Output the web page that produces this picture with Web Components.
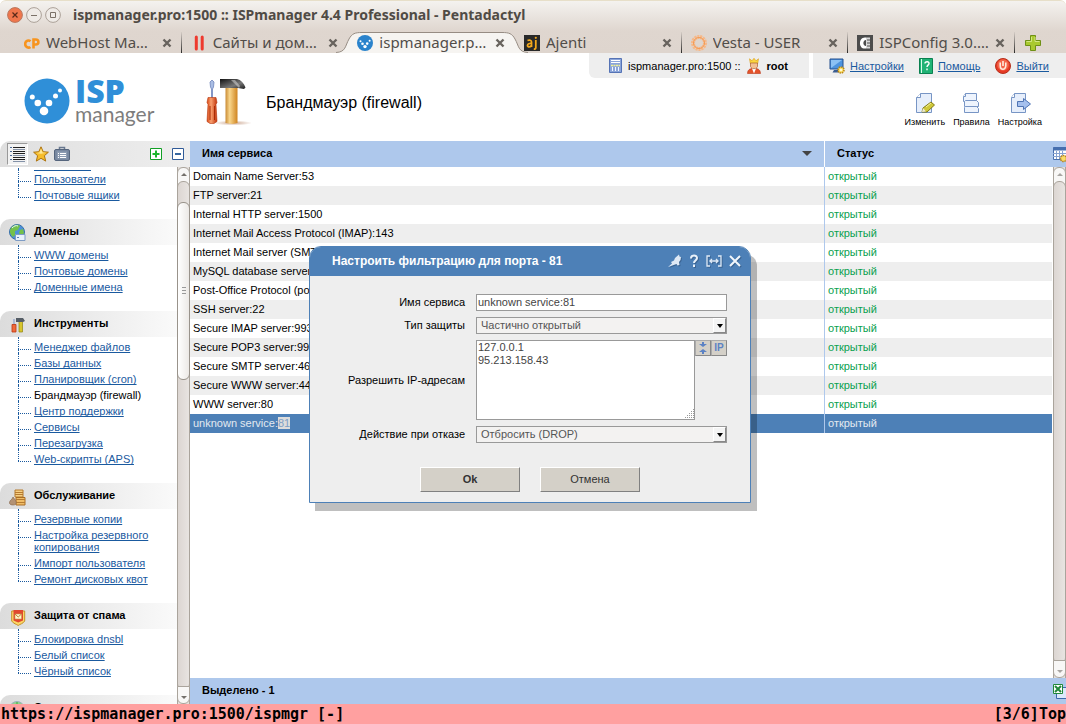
<!DOCTYPE html>
<html lang="ru">
<head>
<meta charset="utf-8">
<meta name="viewport" content="width=device-width, initial-scale=1">
<title>ISPmanager 4.4 Professional</title>
<style>
  html, body { margin: 0; height: 100%; }
  body {
    font: 11px/12px "Liberation Sans", Arial, sans-serif;
    color: #000; background: #fff;
    --blue: #4d80b7; --pale: #aec8ec; --link: #1a5a9f; --stripe: #eeeeee;
  }
</style>
</head>
<body>
<manager-app></manager-app>

<script>
const ICONS = {
  'win-close': [16, 16, `<circle cx="8" cy="8" r="7.4" fill="#f0764c" stroke="#b9785f"/><path d="M5.5 5.5l5 5m0-5l-5 5" stroke="#5b2a19" stroke-width="1.2"/>`],
  'win-min': [16, 16, `<circle cx="8" cy="8" r="7.4" fill="#efebe7" stroke="#aba198"/><path d="M5 8.5h6" stroke="#7b7168"/>`],
  'win-max': [16, 16, `<circle cx="8" cy="8" r="7.4" fill="#efebe7" stroke="#aba198"/><path d="M5.5 5.5h5v5h-5z" fill="none" stroke="#7b7168"/>`],
  'tab-close': [10, 10, `<path d="M1.5 1.5l7 7m0-7l-7 7" stroke="#68635e" stroke-width="2.4"/>`],
  'plus': [16, 16, `<path d="M5.5 .5h5v5h5v5h-5v5h-5v-5h-5v-5h5z" fill="#a9c92f" stroke="#6f9016"/><path d="M6.5 2v4.500h-5M10 2v4.500h4.500" fill="none" stroke="#d3e684"/>`],
  'cpanel': [16, 16, `<path d="M6.500 6.200C5 4.900 1.200 5.300 1.200 9c0 3.500 3.600 4.300 5.200 3M9.500 13.500V4.500h2.200c3.600 0 3.600 5 0 5h-1.500" fill="none" stroke="#f7941e" stroke-width="2.600"/>`],
  'plesk': [16, 16, `<path d="M5.300 2v12M11.200 2v12" stroke="#ee3a2e" stroke-width="3" stroke-linecap="round"/>`],
  'isp': [16, 16, `<circle cx="8" cy="8" r="8" fill="#2a83cc"/><g fill="#fff"><circle cx="3.500" cy="6.200" r="1"/><circle cx="5.500" cy="8.700" r="1.300"/><circle cx="8" cy="11.600" r="1.700"/><circle cx="10.200" cy="8.600" r="1.300"/><circle cx="12.600" cy="5.800" r="1"/></g>`],
  'ajenti': [16, 16, `<path d="M0 0h16v16H0z" fill="#292929"/><path d="M3.500 5.500c2-.8 4-.4 4 1.500v5M7.500 8.500c-2-.2-4 .2-4 1.900 0 2 3.300 1.800 4 0M11.800 5v7.500c0 1.200-.7 1.700-2 1.600" fill="none" stroke="#f5a81c" stroke-width="1.800"/><circle cx="11.800" cy="2.800" r="1.100" fill="#f5a81c"/>`],
  'vesta': [16, 16, `<circle cx="8" cy="8" r="6" fill="none" stroke="#f7b888" stroke-width="4" stroke-dasharray="1.900 .7"/><circle cx="8" cy="8" r="5.500" fill="none" stroke="#f49a52"/>`],
  'ispconfig': [16, 16, `<path d="M0 0h16v16H0z" fill="#4c4c4c"/><path d="M9 2.500C1 1 1 15 9 13.500v-2.500C5.500 11 5.500 5 9 5z" fill="#fff"/><path d="M9 2.500h4v11H9z" fill="#d8d8d8"/><path d="M10 5h3M10 8h3M10 11h3" stroke="#4c4c4c"/>`],
  'logo': [46, 46, `<circle cx="23" cy="23" r="22.500" fill="#2f8fd8"/><g fill="#fff"><circle cx="8.300" cy="19" r="2.500"/><circle cx="13.800" cy="25" r="3.300"/><circle cx="20" cy="33" r="4.300"/><circle cx="25" cy="25" r="3.300"/><circle cx="31.500" cy="18" r="2.500"/><circle cx="36" cy="12.600" r="2"/></g>`],
  'tools': [48, 48, `
    <defs>
      <linearGradient id="w" x2="1"><stop stop-color="#c98b35"/><stop offset=".35" stop-color="#f9d68b"/><stop offset="1" stop-color="#cf8420"/></linearGradient>
      <linearGradient id="r" x2="1"><stop stop-color="#d94714"/><stop offset=".4" stop-color="#f9a06f"/><stop offset="1" stop-color="#c13208"/></linearGradient>
      <linearGradient id="k" x2="1" y2="1"><stop stop-color="#111"/><stop offset=".6" stop-color="#777"/><stop offset="1" stop-color="#1b1b1b"/></linearGradient>
      <radialGradient id="s"><stop stop-color="#a05a30" stop-opacity=".55"/><stop offset="1" stop-color="#a05a30" stop-opacity="0"/></radialGradient>
    </defs>
    <ellipse cx="28" cy="45" rx="19" ry="2.500" fill="url(#s)"/>
    <path d="M5 4l2-2 2 2-.5 5-1 2v9h-1v-9l-1-2z" fill="#a9bde4" stroke="#7085bb" stroke-width=".8"/>
    <path d="M3 19.500h8l1 5-1 2 1 17-3 2H5l-3-2 1-17-1-2z" fill="url(#r)" stroke="#b5380f" stroke-width=".6"/>
    <path d="M5 28v14M9.500 28v14" stroke="#a92c07"/>
    <path d="M20.500 10h12v35l-5 1-7-1z" fill="url(#w)"/>
    <path d="M15 1h17c4 1 7 4 8.500 8.500L39 11l-6-1H15z" fill="url(#k)"/><path d="M26 2h4l5 6-1 2z" fill="#c9c9c9" opacity=".6"/>`],
  'server': [13, 15, `<path d="M.5 .5h12v14H.5z" fill="#8ba5d9" stroke="#5573b5"/><path d="M2 2.500h9M2 4.500h9" stroke="#fff"/><path d="M2 7.500h9" stroke="#eef099" stroke-width="1.500" stroke-dasharray="2 .5"/><path d="M3.500 9v4M6.500 9v4M9.500 9v4" stroke="#f2f6ff"/>`],
  'king': [14, 16, `<path d="M2.500 .8l2.500 2L7 .3l2 2.500 2.500-2-.8 4.700H3.300z" fill="#fbd63e" stroke="#d69a17" stroke-width=".6"/><path d="M3.500 5h7v3.500c-.7 3-6.300 3-7 0z" fill="#f3c094" stroke="#a8602f" stroke-width=".7"/><path d="M.5 15.500c.2-4 2.500-4.500 4-5L7 13l2.500-2.500c1.500.5 3.800 1 4 5z" fill="#e4532a" stroke="#b83818" stroke-width=".6"/><path d="M5 10.500l2 5 2-5-2 1z" fill="#fff"/>`],
  'monitor': [16, 16, `<path d="M1 1h13v10H1z" fill="#4d93de" stroke="#24508f"/><path d="M2 2h11L2 10z" fill="#8cc1f3"/><path d="M5 12h5l1.500 2.500h-8z" fill="#3b5d91"/><circle cx="12" cy="12" r="3" fill="#fce16c" stroke="#bd8612" stroke-width="1.500" stroke-dasharray="1.500 .8"/><circle cx="12" cy="12" r="1" fill="#fff"/>`],
  'book': [14, 16, `<path d="M.5 .5h13v15H.5z" fill="#20b375" stroke="#0b8150"/><path d="M2.500 1v14" stroke="#d9fbe9"/><path d="M6 5.500c0-2.600 4.500-2.300 4 .2-.3 1.500-2 1.500-2 3.300M8 10.500v1.800" fill="none" stroke="#fff" stroke-width="1.400"/>`],
  'power': [16, 16, `<circle cx="8" cy="8" r="7.500" fill="#e63a25" stroke="#b6301c"/><circle cx="8" cy="7" r="5.800" fill="#f4654a"/><path d="M5.200 4.500v3c0 5 5.600 5 5.600 0v-3M8 3v5" fill="none" stroke="#ffeadd" stroke-width="1.600"/>`],
  'edit': [22, 24, `<path d="M6.500 1.500h11v19h-15v-15z" fill="#e6eefb" stroke="#7795c5"/><path d="M6.500 1.500v4h-4" fill="#fff" stroke="#7795c5"/><path d="M8 20l1-4 8-6 3.500 3-7.500 7z" fill="#cfc838" stroke="#817b16"/><path d="M8 20l1-4 3 3.500z" fill="#eceada"/><path d="M12 15l5-4" stroke="#f7f29d"/>`],
  'rules': [22, 24, `<g fill="#eef4fd" stroke="#7795c5"><path d="M5.500 1.500h11v8h-13v-5z"/><path d="M5.500 8.500h11l2 2v4h-14v-5z"/><path d="M5.500 14.500h11l2 2v4h-14v-5z"/></g><path d="M5.500 1.500v3h-2" fill="#fff" stroke="#7795c5"/>`],
  'export': [22, 24, `<path d="M5.500 1.500h11v19h-14v-15z" fill="#e6eefb" stroke="#7795c5"/><path d="M5.500 1.500v4h-3" fill="#fff" stroke="#7795c5"/><path d="M8.500 9.500h6v-3l7 5.500-7 5.500v-3h-6z" fill="#a5c0ee" stroke="#4f74b4"/>`],
  'list': [16, 16, `<path d="M3 1.500h12M3 5.500h12M3 7.500h12M3 11.500h12M3 13.500h12" stroke="#222"/><path d="M3 3.500h12M3 9.500h12M3 15.500h12" stroke="#8492a8"/><path d="M0 1.500h2M0 5.500h2M0 9.500h2M0 13.500h2" stroke="#4d6c9b"/>`],
  'star': [16, 16, `<path d="M8 .8l2.200 4.900 5.200.5-4 3.500 1.300 5.400L8 12.300l-4.700 2.800 1.300-5.400-4-3.500 5.200-.5z" fill="#f6bd2c" stroke="#ad7410"/><path d="M8 2.500l1.500 4 4 .3-5.500 1-5-.8 3.500-.5z" fill="#ffe894"/>`],
  'clip': [16, 16, `<rect x=".5" y="3.500" width="15" height="11" rx="1.500" fill="#7888a0" stroke="#55657d"/><path d="M5.500 3V1.500h5V3" fill="none" stroke="#68788f" stroke-width="1.500"/><path d="M3 5.500h10v7H3z" fill="#8d9cb2"/><path d="M4 7.500h1M6 7.500h6M4 9.500h1M6 9.500h6M4 11.500h1M6 11.500h6" stroke="#fff"/>`],
  'expand': [13, 13, `<path d="M.5 .5h11v11H.5z" fill="#fff" stroke="#119f25"/><path d="M6 2.500v7M2.500 6h7" stroke="#1bb62d" stroke-width="2"/>`],
  'collapse': [13, 13, `<path d="M.5 .5h11v11H.5z" fill="#fff" stroke="#305b98"/><path d="M3 6h6" stroke="#36669f" stroke-width="2"/>`],
  'globe': [18, 18, `<circle cx="8" cy="8" r="7.500" fill="#4d91d9" stroke="#376fa8"/><path d="M2 4c3-4 7-4 9-2L9 6 6 7v4l-2 2C1 10 0 7 2 4zM11 6l3-1 1 4-3 4-2-4z" fill="#74c14a"/><path d="M3 4c2-2 4-3 6-2" stroke="#e3f5ff" fill="none"/><path d="M6.500 10.500h9.500v6H6.500z" fill="#e8f1fc" stroke="#7e9cc5"/><path d="M8 13.500h2" stroke="#5f82b5"/>`],
  'smalltools': [16, 16, `<path d="M5 2v6" stroke="#9aabce" stroke-width="1.500"/><path d="M3 7.500h4V15H3z" fill="#ee6a3b" stroke="#bd3512" stroke-width=".8"/><path d="M10 4h3.500v11H10z" fill="#d7c52d" stroke="#92850f" stroke-width=".7"/><path d="M7 1h7l2 3-2 1H7z" fill="#555d66"/>`],
  'crates': [17, 17, `<path d="M6 1h8v7H6z" fill="#f6cf83" stroke="#b57a2e"/><path d="M7 8.500h9V16H7z" fill="#f0bd67" stroke="#aa6d24"/><path d="M6 3.500h8M6 5.500h8M7 10.500h9M7 13.500h9" stroke="#b67b31"/><path d="M4 8l-1 2c-4 3-3 6 1 6s4-3 1.500-6z" fill="#b39274" stroke="#84654a" stroke-width=".6"/>`],
  'shield': [17, 17, `<path d="M2.700 2h13v10c-2 3-4.700 3-6.500 4.500C7.400 15 4.700 15 2.700 12z" fill="#fbd768" stroke="#c3912a"/><path d="M4.500 1h9.500v10.500l-4.800 2-4.700-2z" fill="#e1472f"/><path d="M6 5h6.500v5H6z" fill="#fff4cf" stroke="#c99c4f" stroke-width=".6"/><path d="M6 5l3.200 3 3.300-3" fill="none" stroke="#bc8532"/>`],
  'stats': [17, 17, `<circle cx="8" cy="8" r="7.500" fill="#8fd48c" stroke="#9db0bf"/><path d="M8 1v7h7" stroke="#3ea940" fill="none"/>`],
  'sort': [10, 5, `<path d="M0 0h10L5 5z" fill="#444"/>`],
  'grid': [14, 16, `<path d="M.5 .5h13v12H.5z" fill="#fff" stroke="#466fae"/><path d="M0 2h14" stroke="#466fae" stroke-width="3"/><path d="M3.500 4v8M6.500 4v8M9.500 4v8M0 6.500h14M0 9.500h14" stroke="#86a2d0"/><circle cx="10.500" cy="11.500" r="3" fill="#fbdc68" stroke="#b78520" stroke-width="1.500" stroke-dasharray="1.500 .7"/>`],
  'excel': [14, 16, `<path d="M3.500 3.500h11v11h-11z" fill="#dbe8fb" stroke="#3b68ac"/><path d="M.5 .5h9v9h-9z" fill="#fff" stroke="#21883a"/><path d="M2 2l6 6M8 2L2 8" stroke="#21883a" stroke-width="2"/>`],
  'pin': [14, 14, `<path d="M0 13l4-3.500L3 8l3-1.500L7 4l4-3.500.500 2L13 3l-.5 3-1.500 2 .5 3-2 .5-1-1.500z" fill="#dfe9f5"/>`],
  'help': [10, 14, `<path d="M2 4.500c0-4 6-3.700 6-.5C8 6.500 5 6.500 5 9M5 10.500V13" fill="none" stroke="#e9f1fa" stroke-width="2"/>`],
  'width': [16, 12, `<path d="M4 1H1v10h3M12 1h3v10h-3M3.500 6h9M6 4L4 6l2 2M10 4l2 2-2 2" fill="none" stroke="#dfe9f5" stroke-width="1.300"/>`],
  'close': [12, 12, `<path d="M1 1l10 10M11 1L1 11" stroke="#f2f7fc" stroke-width="2"/>`],
  'shrink': [8, 12, `<path d="M3 0h2v2h3L4 5 0 2h3zM4 7l4 3H5v2H3v-2H0z" fill="#5c82c4"/>`],
  'down': [6, 4, `<path d="M0 0h6L3 4z" fill="#000"/>`],
  'grip': [10, 10, `<path d="M9.500 0v10M7.500 2v8M5.500 4v6M3.500 6v4M1.500 8v2" stroke="#999" stroke-dasharray="1 1"/>`],
  'thumb-up': [6, 3, `<path d="M0 3h6L3 0z" fill="#74706b"/>`],
  'thumb-down': [6, 3, `<path d="M0 0h6L3 3z" fill="#74706b"/>`],
  'curve': [26, 21, `<path d="M0 20.500C10 20 9 14 13 7 16 1.500 19 .5 26 .5V21H0z" fill="#f6f4f1"/><path d="M0 20.500C10 20 9 14 13 7 16 1.500 19 .5 26 .5" fill="none" stroke="#968c83"/>`]
};

function define(name, css, html, setup) {
  const template = document.createElement('template');
  template.innerHTML = `<style>*{box-sizing:border-box}${css}</style>${html}`;
  customElements.define(name, class extends HTMLElement {
    constructor() {
      super();
      this.attachShadow({ mode: 'open' }).append(template.content.cloneNode(true));
    }
    connectedCallback() {
      if (setup && !this.ready) { this.ready = true; setup(this, this.shadowRoot); }
    }
  });
}

define('ui-icon', `:host{display:block;flex:none;line-height:0}svg{display:block}`, `<span></span>`, (host, root) => {
  const [w, h, body] = ICONS[host.getAttribute('name')];
  root.querySelector('span').innerHTML = `<svg width="${w}" height="${h}" viewBox="0 0 ${w} ${h}" aria-hidden="true">${body}</svg>`;
});

/* Window frame: title and tab strip */
define('browser-tab', `
  :host{display:flex;align-items:center;flex:167 1 0;min-width:0;gap:6px;padding:0 9px;height:21px;position:relative;border-right:1px solid transparent;color:#514d49}
  :host([divider]){border-right:1px solid;border-image:linear-gradient(#dfd6cf,#222) 1}
  .label{flex:1;min-width:0;overflow:hidden;white-space:nowrap;padding-bottom:2px}
  button{border:0;padding:0;background:none;flex:none}
  .edge{display:none;position:absolute;top:0;left:-12px}
  .edge.r{left:auto;right:-14px;transform:scaleX(-1)}
  .top{display:none;position:absolute;left:13px;right:11px;top:0;height:100%;background:#f6f4f1;border-top:1px solid #968c83}
  :host([active]) :is(.edge,.top){display:block}
  .site,.label,button{position:relative}`,
  `<div class="top"></div><ui-icon class="edge" name="curve"></ui-icon><ui-icon class="edge r" name="curve"></ui-icon>
   <span class="site"></span><span class="label"><slot></slot></span><button type="button" aria-label="Закрыть вкладку"><ui-icon name="tab-close"></ui-icon></button>`,
  (host, root) => { root.querySelector('.site').innerHTML = `<ui-icon name="${host.getAttribute('icon')}"></ui-icon>`; });

define('browser-frame', `
  :host{display:block;background:linear-gradient(#f4f2ef,#dfd6cf 30px,#ded5ce);font:15px/18px "Noto Sans",sans-serif;border-top:1px solid #e7dfc9;border-radius:6px 6px 0 0}
  .title{display:flex;align-items:center;height:31px;padding:0 7px 4px;gap:3px;color:#504b45;font-weight:700;font-size:14px}
  .title span{padding-left:9px;white-space:nowrap}
  nav{display:flex;height:21px;padding:0 0 0 15px}
  .new{border:0;background:none;width:51px;padding:0 0 0 10px;flex:none}`,
  `<div class="title"><ui-icon name="win-close"></ui-icon><ui-icon name="win-min"></ui-icon><ui-icon name="win-max"></ui-icon>
     <span>ispmanager.pro:1500 :: ISPmanager 4.4 Professional - Pentadactyl</span></div>
   <nav>
     <browser-tab icon="cpanel" divider>WebHost Ma…</browser-tab><browser-tab icon="plesk">Сайты и дом…</browser-tab>
     <browser-tab icon="isp" active>ispmanager.p…</browser-tab><browser-tab icon="ajenti" divider>Ajenti</browser-tab>
     <browser-tab icon="vesta" divider>Vesta - USER</browser-tab><browser-tab icon="ispconfig" divider>ISPConfig 3.0.…</browser-tab>
     <button class="new" type="button" aria-label="Новая вкладка"><ui-icon name="plus"></ui-icon></button>
   </nav>`);

/* Product header */
define('tool-button', `
  :host{display:block}
  button{display:flex;flex-direction:column;align-items:center;border:0;padding:0;background:none;color:#000;font:9px/12px "Liberation Sans",sans-serif}`,
  `<button type="button"><span></span><slot></slot></button>`,
  (host, root) => { root.querySelector('span').innerHTML = `<ui-icon name="${host.getAttribute('icon')}"></ui-icon>`; });

define('app-header', `
  :host{display:flex;height:88px;background:#fff}
  .logo{display:flex;gap:5px;padding:25px 0 0 24px;width:205px;flex:none}
  .word{display:flex;flex-direction:column}
  .word b{font:800 32px/26px "Open Sans",sans-serif;color:#2f8fd8}
  .word span{font:21px/20px Lato,sans-serif;color:#7d7d7d}
  h1{display:flex;align-items:flex-start;gap:13px;margin:0;padding-top:25px;flex:1;min-width:0;font-weight:400;font-size:16px;line-height:50px;white-space:nowrap}
  .side{display:flex;flex-direction:column;align-items:flex-end;flex:none}
  .bar{display:flex;gap:4px}
  .bar div{display:flex;align-items:center;height:25px;background:#eee;white-space:nowrap}
  .who{padding:0 20px;border-radius:0 0 0 6px;gap:6px}
  .who b{padding-right:1px}
  .links{padding:0 17px 0 16px;gap:5px}
  .links a{color:var(--link);margin-right:10px}
  .links a:last-child{margin-right:0}
  .tools{display:flex;gap:8px;padding:14px 24px 0 0}`,
  `<div class="logo"><ui-icon name="logo"></ui-icon><div class="word"><b>ISP</b><span>manager</span></div></div>
   <h1><ui-icon name="tools"></ui-icon>Брандмауэр (firewall)</h1>
   <div class="side">
     <div class="bar">
       <div class="who"><ui-icon name="server"></ui-icon><span>ispmanager.pro:1500 ::</span><ui-icon name="king"></ui-icon><b>root</b></div>
       <div class="links"><ui-icon name="monitor"></ui-icon><a href="#settings">Настройки</a><ui-icon name="book"></ui-icon><a href="#help">Помощь</a><ui-icon name="power"></ui-icon><a href="#exit">Выйти</a></div>
     </div>
     <div class="tools"><tool-button icon="edit">Изменить</tool-button><tool-button icon="rules">Правила</tool-button><tool-button icon="export">Настройка</tool-button></div>
   </div>`);

define('scroll-rail', `
  :host{display:flex;flex-direction:column;width:13px;flex:none;background:#e3dedb;border:1px solid #aaa49c;border-width:0 1px}
  .cap{height:18px;margin:0 -1px;padding-bottom:4px;display:flex;align-items:center;justify-content:center;background:#f8f7f6;border:1px solid #aaa49c;border-radius:6px 6px 0 0}
  .cap.b{padding:4px 0 0;border-radius:0 0 6px 6px}
  .track{flex:1;display:flex;flex-direction:column;background:linear-gradient(90deg,#dcd6d2,#e8e4e1);border:1px solid #aaa49c;border-radius:6px;margin:-4px -1px}
  .pre{flex:20 1 0}
  .thumb{flex:177 1 0;background:linear-gradient(90deg,#fff,#ece9e6);border:1px solid #99938b;border-radius:6px;margin:0 -1px;display:flex;flex-direction:column;gap:1px;align-items:center;justify-content:center}
  .thumb i{width:4px;height:2px;border-top:1px solid #999}
  .post{flex:311 1 0}
  :host([idle]) :is(.thumb,.pre,.post){display:none}
  :host([idle]) ui-icon{opacity:.6}`,
  `<div class="cap"><ui-icon name="thumb-up"></ui-icon></div><div class="track"><div class="pre"></div><div class="thumb"><i></i><i></i><i></i></div><div class="post"></div></div><div class="cap b"><ui-icon name="thumb-down"></ui-icon></div>`);

/* Sidebar */
define('menu-group', `
  :host{display:block}
  h2{display:flex;align-items:center;height:26px;margin:0;font-size:11px;line-height:12px;border-radius:10px 0 0 0;background:linear-gradient(90deg,#dcdcdc,#fafafa)}
  :host([bare]) h2{display:none}
  .pic{width:34px;padding:2px 0 0 9px;flex:none}
  .name{padding-bottom:2px}
  .items{padding:2px 0 16px;position:relative}
  ::slotted(menu-item:last-of-type){--rail:10px}`,
  `<h2><span class="pic"></span><span class="name"></span></h2><div class="items"><slot></slot></div>`,
  (host, root) => {
    if (host.hasAttribute('icon')) root.querySelector('.pic').innerHTML = `<ui-icon name="${host.getAttribute('icon')}"></ui-icon>`;
    root.querySelector('.name').textContent = host.getAttribute('label') || '';
  });

define('menu-item', `
  :host{display:block;position:relative;padding:2px 20px 2px 34px}
  :host::before{content:"";position:absolute;left:18px;top:-2px;height:calc(var(--rail,100%) + 2px);border-left:1px dotted var(--link)}
  :host::after{content:"";position:absolute;left:18px;top:10px;width:13px;border-top:1px dotted var(--link)}
  a{color:var(--link);text-decoration-skip-ink:none}
  :host([current]) a{color:#000;text-decoration:none}
  :host([cut]) a{display:block;width:57px;height:14px;margin-bottom:-2px;border-bottom:1px solid var(--link)}`,
  `<a href="#section"><slot></slot></a>`);

define('app-sidebar', `
  :host{display:flex;flex-direction:column;width:190px;flex:none;min-height:0}
  .bar{display:flex;align-items:center;height:26px;flex:none;background:linear-gradient(90deg,#dfdfdf,#eee);padding:0 5px 0 7px;border-radius:10px 0 0 0;gap:5px}
  button{border:0;padding:0;background:none}
  .on{border:1px solid #aaa;border-color:#999 #fff #fff #999;background:#f2f2f2;width:21px;height:22px;padding:0 2px}
  .gap{flex:1}
  .pair{display:flex;gap:9px}
  .view{display:flex;flex:1;min-height:0}
  nav{flex:1;min-width:0;overflow:hidden}
  nav>:first-child{margin-top:-14px}`,
  `<div class="bar"><button class="on" type="button" aria-label="Меню"><ui-icon name="list"></ui-icon></button>
     <button type="button" aria-label="Избранное"><ui-icon name="star"></ui-icon></button><button type="button" aria-label="Задачи"><ui-icon name="clip"></ui-icon></button>
     <span class="gap"></span><div class="pair"><button type="button" aria-label="Развернуть"><ui-icon name="expand"></ui-icon></button>
     <button type="button" aria-label="Свернуть"><ui-icon name="collapse"></ui-icon></button></div></div>
   <div class="view"><nav>
     <menu-group bare><menu-item cut></menu-item><menu-item>Пользователи</menu-item><menu-item>Почтовые ящики</menu-item></menu-group>
     <menu-group icon="globe" label="Домены"><menu-item>WWW домены</menu-item><menu-item>Почтовые домены</menu-item><menu-item>Доменные имена</menu-item></menu-group>
     <menu-group icon="smalltools" label="Инструменты"><menu-item>Менеджер файлов</menu-item><menu-item>Базы данных</menu-item><menu-item>Планировщик (cron)</menu-item><menu-item current>Брандмауэр (firewall)</menu-item><menu-item>Центр поддержки</menu-item><menu-item>Сервисы</menu-item><menu-item>Перезагрузка</menu-item><menu-item>Web-скрипты (APS)</menu-item></menu-group>
     <menu-group icon="crates" label="Обслуживание"><menu-item>Резервные копии</menu-item><menu-item>Настройка резервного копирования</menu-item><menu-item>Импорт пользователя</menu-item><menu-item>Ремонт дисковых квот</menu-item></menu-group>
     <menu-group icon="shield" label="Защита от спама"><menu-item>Блокировка dnsbl</menu-item><menu-item>Белый список</menu-item><menu-item>Чёрный список</menu-item></menu-group>
     <menu-group icon="stats" label="Статистика"></menu-group>
   </nav><scroll-rail></scroll-rail></div>`);

/* Service list */
define('service-list', `
  :host{display:flex;flex-direction:column;flex:1;min-width:0}
  .wrap{display:flex;flex:1;min-height:0;background:linear-gradient(var(--pale) 26px,#fff 26px)}
  .data{flex:1;min-width:0}
  table{width:100%;border-collapse:separate;border-spacing:0;table-layout:fixed}
  th{height:26px;padding:0 12px 2px;background:var(--pale);text-align:left}
  th:first-child div{display:flex;justify-content:space-between;align-items:center}
  th+th{width:228px;border-left:1px solid #fff}
  td{height:19px;padding:0 3px 1px;white-space:nowrap}
  td+td{border-left:1px solid var(--pale);color:#0aa14f}
  tbody tr:nth-child(even) td{background:var(--stripe)}
  tbody tr.sel td{background:var(--blue);color:#e3e9f0}
  mark{background:#dcdcdc;color:#7d9fc5}
  .end{display:flex;flex-direction:column;width:14px;flex:none;overflow:hidden}
  .end button,footer button{border:0;padding:0 0 0 1px;background:none;width:14px}
  .end button{height:26px;flex:none;padding-top:2px}
  scroll-rail{flex:1;margin-left:1px}
  footer{display:flex;align-items:center;height:26px;flex:none;background:var(--pale);font-weight:700;overflow:hidden}
  footer span{flex:1;padding:0 12px 2px}
  footer button{padding-top:2px}`,
  `<div class="wrap"><div class="data"><table><thead><tr><th><div>Имя сервиса<ui-icon name="sort"></ui-icon></div></th><th>Статус</th></tr></thead><tbody></tbody></table></div>
     <div class="end"><button type="button" aria-label="Настройка столбцов"><ui-icon name="grid"></ui-icon></button><scroll-rail idle></scroll-rail></div></div>
   <footer><span>Выделено - 1</span><button type="button" aria-label="Экспорт в Excel"><ui-icon name="excel"></ui-icon></button></footer>`,
  (host, root) => {
    const names = ['Domain Name Server:53', 'FTP server:21', 'Internal HTTP server:1500', 'Internet Mail Access Protocol (IMAP):143',
      'Internet Mail server (SMTP):25', 'MySQL database server:3306', 'Post-Office Protocol (pop3):110', 'SSH server:22',
      'Secure IMAP server:993', 'Secure POP3 server:995', 'Secure SMTP server:465', 'Secure WWW server:443', 'WWW server:80'];
    root.querySelector('tbody').innerHTML = names.map(n => `<tr><td>${n}</td><td>открытый</td></tr>`).join('') +
      '<tr class="sel"><td>unknown service:<mark>81</mark></td><td>открытый</td></tr>';
  });

/* Port filter dialog */
define('port-dialog', `
  :host{display:block;width:442px;background:#eee;border:1px solid var(--blue);border-radius:12px 12px 0 0;box-shadow:6px 8px 0 rgba(0,0,0,.25)}
  header{display:flex;align-items:center;height:29px;background:var(--blue);color:#fff;border-radius:11px 11px 0 0;padding:0 9px 2px 22px;gap:7px}
  h2{flex:1;margin:0;font-size:12px;line-height:14px}
  header button{border:0;background:none;padding:0}
  header ui-icon{filter:drop-shadow(1px 1px 0 #3a6494)}
  form{display:grid;grid-template-columns:155px 251px;column-gap:11px;row-gap:6px;align-items:center;padding:18px 0 10px}
  label{text-align:right;padding-bottom:1px}
  input,textarea,select{display:block;margin:0;border:1px solid #999;border-radius:0;background:#fff;color:#444;font:11px/13px "Liberation Sans",sans-serif;outline:0}
  input{width:100%;height:17px;padding:0 1px 2px}
  .pick{position:relative}
  select{appearance:none;width:100%;height:17px;padding:0 4px;background:#f3f2f1;color:#555}
  .pick span{position:absolute;right:1px;top:1px;width:13px;height:15px;display:grid;place-items:center;background:#f4f4f4;border:1px solid #888;border-color:#fff #888 #888 #fff;pointer-events:none}
  .ips{display:flex}
  .area{position:relative;flex:1}
  textarea{width:100%;height:80px;padding:0 1px;resize:none}
  .area ui-icon{position:absolute;right:1px;bottom:1px}
  .ips button{width:16px;height:16px;padding:0;border:1px solid #999;border-color:#aaa #888 #888 #aaa;background:#d4d0c8;color:#5c82c4;font:700 10px/12px "Liberation Sans",sans-serif;display:grid;place-items:center}
  .actions{grid-column:1/-1;display:flex;justify-content:center;gap:20px;padding:18px 0 0 23px}
  .actions button{width:100px;height:25px;background:#d4d0c8;border:1px solid #808080;border-color:#fff #808080 #808080 #fff;color:#333;font:11px/13px "Liberation Sans",sans-serif;padding:0}
  .actions button:first-child{font-weight:700}`,
  `<header><h2>Настроить фильтрацию для порта - 81</h2>
     <button type="button" aria-label="Закрепить"><ui-icon name="pin"></ui-icon></button><button type="button" aria-label="Справка"><ui-icon name="help"></ui-icon></button>
     <button type="button" aria-label="Ширина"><ui-icon name="width"></ui-icon></button><button type="button" aria-label="Закрыть"><ui-icon name="close"></ui-icon></button></header>
   <form>
     <label for="name">Имя сервиса</label><input id="name" value="unknown service:81">
     <label for="kind">Тип защиты</label><div class="pick"><select id="kind"><option>Частично открытый</option></select><span><ui-icon name="down"></ui-icon></span></div>
     <label for="ips">Разрешить IP-адресам</label>
     <div class="ips"><div class="area"><textarea id="ips">127.0.0.1
95.213.158.43</textarea><ui-icon name="grip"></ui-icon></div><button type="button" aria-label="Сжать поле"><ui-icon name="shrink"></ui-icon></button><button type="button">IP</button></div>
     <label for="deny">Действие при отказе</label><div class="pick"><select id="deny"><option>Отбросить (DROP)</option></select><span><ui-icon name="down"></ui-icon></span></div>
     <div class="actions"><button type="button">Ok</button><button type="button">Отмена</button></div>
   </form>`);

define('status-line', `
  :host{display:flex;justify-content:space-between;height:20px;flex:none;padding-left:1px;background:#ffa0a0;font:700 15px/20px "DejaVu Sans Mono",monospace;white-space:pre}`,
  `<span>https://ispmanager.pro:1500/ispmgr [-]</span><span>[3/6]Top</span>`);

define('manager-app', `
  :host{display:flex;flex-direction:column;height:100vh;min-height:600px;overflow:hidden;position:relative}
  browser-frame,app-header{flex:none}
  main{display:flex;flex:1;min-height:0}
  port-dialog{position:absolute;left:calc(50% - 224px);top:246px}`,
  `<browser-frame></browser-frame><app-header></app-header>
   <main><app-sidebar></app-sidebar><service-list></service-list></main>
   <status-line></status-line><port-dialog></port-dialog>`);
</script>
</body>
</html>
